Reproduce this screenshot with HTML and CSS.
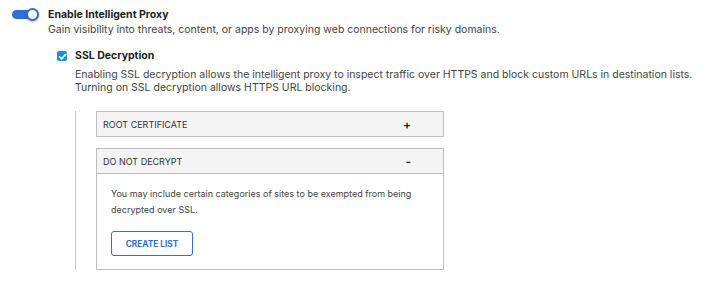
FILE: index.html
```html
<!DOCTYPE html>
<html lang="en">
<head>
  <meta charset="UTF-8">
  <title>Intelligent Proxy</title>
  <link rel="stylesheet" href="styles.css">
</head>
<body>
  <div class="setting">
    <span class="toggle"><span class="knob"></span></span>
    <div class="setting-text">
      <div class="setting-title">Enable Intelligent Proxy</div>
      <div class="setting-desc">Gain visibility into threats, content, or apps by proxying web connections for risky domains.</div>
    </div>
  </div>

  <div class="option">
    <span class="checkbox">
      <svg width="9" height="9" viewBox="0 0 10 10"><path d="M1.6 5.3 L4 7.6 L8.5 2.6" fill="none" stroke="#fff" stroke-width="1.8" stroke-linecap="round" stroke-linejoin="round"/></svg>
    </span>
    <div class="setting-text">
      <div class="setting-title">SSL Decryption</div>
      <div class="option-desc">Enabling SSL decryption allows the intelligent proxy to inspect traffic over HTTPS and block custom URLs in destination lists.<br>Turning on SSL decryption allows HTTPS URL blocking.</div>
    </div>
  </div>

  <div class="panels">
    <div class="panel">
      <div class="panel-head">
        <span>ROOT CERTIFICATE</span>
        <span class="sign">+</span>
      </div>
    </div>
    <div class="panel">
      <div class="panel-head">
        <span>DO NOT DECRYPT</span>
        <span class="sign">-</span>
      </div>
      <div class="panel-body">
        <p>You may include certain categories of sites to be exempted from being decrypted over SSL.</p>
        <button class="btn-outline">CREATE LIST</button>
      </div>
    </div>
  </div>
</body>
</html>
```

FILE: styles.css
```css
body {
  margin: 0;
  padding: 7px 0 0 12px;
  font-family: Inter, "Open Sans", sans-serif;
  color: #333;
  background: #fff;
}

.setting {
  display: flex;
  align-items: flex-start;
}

.toggle {
  position: relative;
  width: 24px;
  height: 9px;
  margin-top: 3px;
  background: #2f6fd6;
  border-radius: 5px;
  flex-shrink: 0;
}

.knob {
  position: absolute;
  left: 14px;
  top: -2px;
  width: 13px;
  height: 13px;
  box-sizing: border-box;
  border: 2px solid #2f6fd6;
  border-radius: 50%;
  background: #fff;
  box-shadow: 0 1px 2px rgba(0, 0, 0, 0.3);
}

.setting .setting-text {
  margin-left: 12px;
}

.setting-title {
  font-size: 10.5px;
  font-weight: 700;
  line-height: 15px;
  color: #222;
}

.setting-desc {
  font-size: 10.5px;
  line-height: 15px;
  color: #444;
}

.option {
  display: flex;
  align-items: flex-start;
  margin: 11px 0 0 45px;
}

.checkbox {
  width: 10px;
  height: 10px;
  border-radius: 2px;
  background: #1d8fd0;
  display: flex;
  align-items: center;
  justify-content: center;
  margin-top: 3px;
  flex-shrink: 0;
}

.option .setting-text {
  margin-left: 8px;
}

.option-desc {
  margin-top: 5px;
  font-size: 10.5px;
  line-height: 13px;
  color: #444;
}

.panels {
  margin: 17px 0 0 63px;
  padding: 0 0 0 20px;
  border-left: 1px solid #c8c8c8;
  width: 348px;
  display: flex;
  flex-direction: column;
  gap: 11px;
}

.panel {
  border: 1px solid #bdbdbd;
}

.panel-head {
  display: flex;
  justify-content: space-between;
  align-items: center;
  height: 24px;
  padding: 0 32px 0 6px;
  background: #f4f4f4;
  font-size: 9px;
  color: #333;
}

.sign {
  font-size: 12px;
  font-weight: 600;
  color: #222;
}

.panel-body {
  border-top: 1px solid #bdbdbd;
  padding: 12px 14px 13px;
}

.panel-body p {
  margin: 0 0 13px;
  font-size: 9px;
  line-height: 16px;
  color: #444;
  width: 310px;
}

.btn-outline {
  display: block;
  font-family: Inter, sans-serif;
  font-size: 8.3px;
  font-weight: 700;
  color: #2f6fd6;
  background: #fff;
  border: 1px solid #2f6fd6;
  border-radius: 3px;
  width: 82px;
  height: 25px;
  padding: 0;
}
```
